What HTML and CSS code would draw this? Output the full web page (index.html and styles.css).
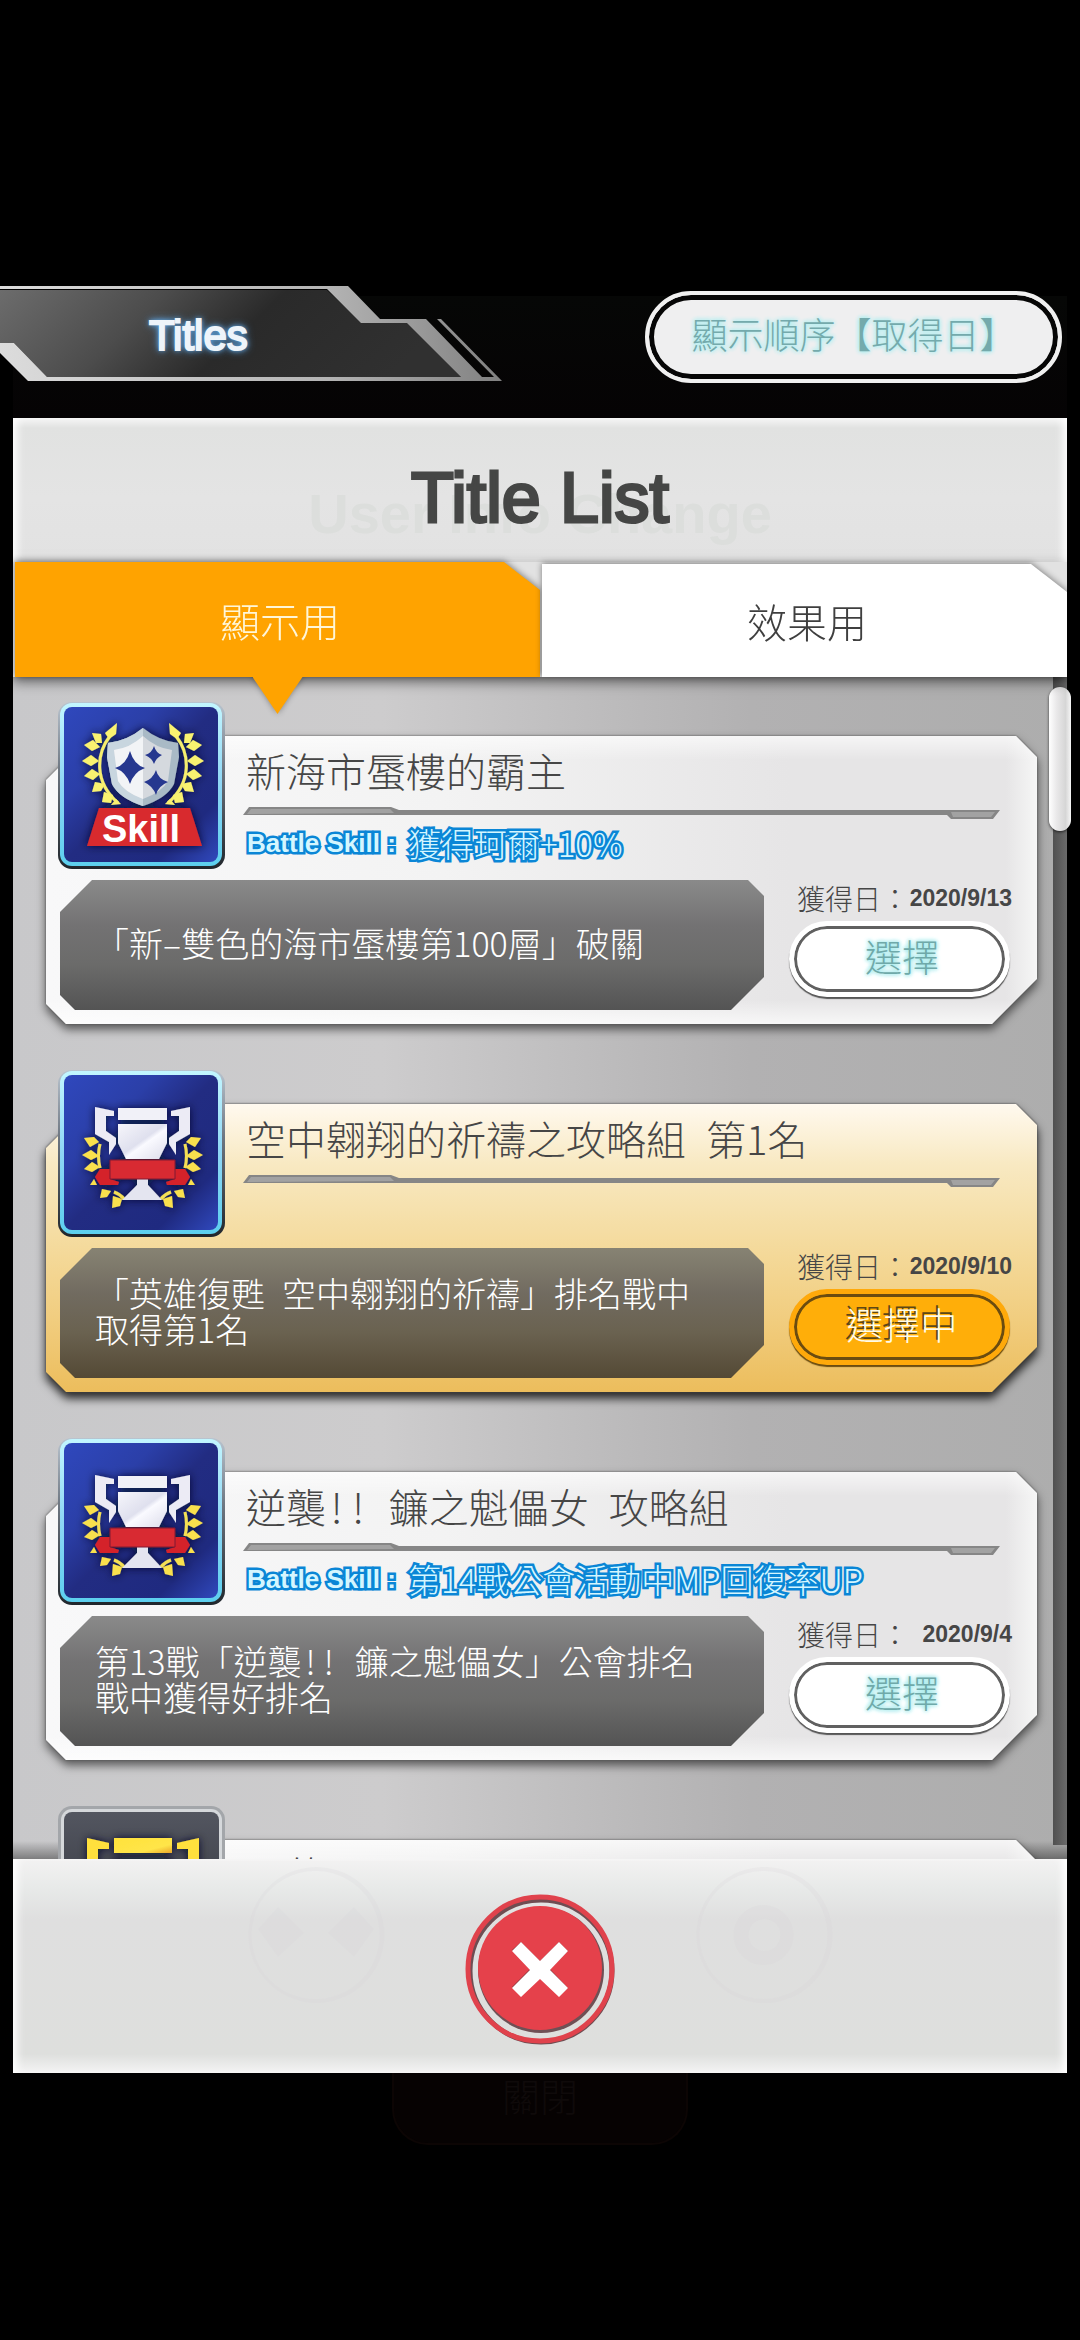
FILE: index.html
```html
<!DOCTYPE html>
<html lang="zh-Hant">
<head>
<meta charset="utf-8">
<meta name="viewport" content="width=device-width, initial-scale=1">
<title>Titles</title>
<link rel="stylesheet" href="styles.css">
</head>
<body>
<svg class="defs" width="0" height="0" aria-hidden="true">
  <defs>
    <linearGradient id="blue" x1="0" y1="0" x2="1" y2="1">
      <stop offset="0" stop-color="#2f48bd"/><stop offset=".3" stop-color="#2b3fa8"/>
      <stop offset=".5" stop-color="#222c82"/><stop offset=".8" stop-color="#1f2a80"/><stop offset="1" stop-color="#3049bd"/>
    </linearGradient>
    <linearGradient id="rim" x1="0" y1="0" x2="0" y2="1">
      <stop offset="0" stop-color="#c2f6ff"/><stop offset=".5" stop-color="#8fd6f5"/><stop offset="1" stop-color="#5ccfee"/>
    </linearGradient>
    <linearGradient id="edge" x1="0" y1="0" x2="0" y2="1">
      <stop offset="0" stop-color="#b9c4cf"/><stop offset=".4" stop-color="#6e7782"/><stop offset="1" stop-color="#20262c"/>
    </linearGradient>
    <linearGradient id="slate" x1="0" y1="0" x2="0" y2="1">
      <stop offset="0" stop-color="#535660"/><stop offset="1" stop-color="#2b2d35"/>
    </linearGradient>
    <linearGradient id="silver" x1="0" y1="0" x2="1" y2="1">
      <stop offset="0" stop-color="#f6f6fb"/><stop offset=".48" stop-color="#dfe0ee"/><stop offset=".56" stop-color="#fafaff"/><stop offset="1" stop-color="#dcdcea"/>
    </linearGradient>
    <linearGradient id="gold" x1="0" y1="0" x2="1" y2="1">
      <stop offset="0" stop-color="#ffe23c"/><stop offset=".7" stop-color="#ffe548"/><stop offset="1" stop-color="#e9a52c"/>
    </linearGradient>
    <filter id="dark" x="-20%" y="-20%" width="140%" height="140%">
      <feDropShadow dx="0" dy="0" stdDeviation="4" flood-color="#060a2c" flood-opacity=".9"/>
    </filter>

    <symbol id="frame" viewBox="0 0 167 167">
      <rect width="167" height="167" rx="14" fill="url(#edge)"/>
      <rect x="2" y="1" width="162" height="163" rx="12" fill="url(#rim)"/>
      <rect x="6" y="5" width="154" height="155" rx="8" fill="url(#blue)"/>
    </symbol>

    <symbol id="skill-laurel" viewBox="0 0 167 167">
      <path d="M52 34C38 52 36 80 60 101" fill="none" stroke="#f6ee6e" stroke-width="3"/>
      <g fill="#f9f26f">
        <path d="M59 21l-1 11-7 5-4-6zM34 31l9 1 1 9-6 0zM26 43l9-5 7 7-8 4zM24 59l9-6 8 6-8 5zM26 74l8-7 8 5-7 6zM34 90l3-10 10 2-4 7zM44 100l2-10 9 3-2 8zM53 103l5-6 5 5z"/>
      </g>
    </symbol>

    <symbol id="skill" viewBox="0 0 167 167">
      <use href="#frame"/>
      <g filter="url(#dark)">
        <use href="#skill-laurel"/>
        <use href="#skill-laurel" transform="translate(170 0) scale(-1 1)"/>
        <path d="M85 26Q101 39 120 41L121 55 116 82Q109 96 85 104 61 96 54 82L49 55 50 41Q69 39 85 26z" fill="#a9bac6"/>
        <path d="M85 26Q69 39 50 41L49 55 54 82Q61 96 85 104z" fill="#c8d6df"/>
        <path d="M85 34Q98 46 114 48L110 79Q104 90 85 97 66 90 60 79L56 48Q72 46 85 34z" fill="#d5d9de"/>
        <path d="M85 34Q72 46 56 48L60 79Q66 90 85 97z" fill="#f2f4f6"/>
        <path d="M72 49Q76 63 87 66 76 70 72 82 68 70 57 66 68 63 72 49zM96 44Q98 51 104 53 98 56 96 62 94 56 87 53 94 51 96 44zM98 68Q100 77 110 80 100 84 98 93 95 84 86 80 95 77 98 68z" fill="#27388f"/>
        <path d="M41 106h91l12 38H29z" fill="#d8292f"/>
      </g>
      <text x="44" y="140" class="badge-text">Skill</text>
    </symbol>

    <symbol id="cup-side" viewBox="0 0 167 167">
      <path d="M37 37l19 4v5h-8v15l10 7v6l-7 11V72L37 64z" fill="#ecebf5"/>
      <path d="M42 74q-3 12 0 24M56 122q6 2 10 7" fill="none" stroke="#f4df55" stroke-width="3"/>
      <path d="M26 68l10-1 5 5-9 5zM24 85l9-5 8 6-8 4zM26 99l8-7 8 5-8 5zM32 115l4-6 3 6zM42 128l2-9 9 2-4 6zM54 138l1-12 9 3-2 7z" fill="#f9e04e"/>
      <path d="M37 107l5-8h10v10l9 3-1 3H42z" fill="#d4222a"/>
    </symbol>

    <symbol id="trophy" viewBox="0 0 167 167">
      <use href="#frame"/>
      <g filter="url(#dark)">
        <use href="#cup-side"/>
        <use href="#cup-side" transform="translate(169 0) scale(-1 1)"/>
        <path d="M60 38h49v12H60z" fill="#f1f1f8"/>
        <path d="M60 54h49v19l-8 16H68L60 73z" fill="url(#silver)"/>
        <path d="M79 109h11v6l14 15H64l15-15z" fill="#e4e5f0"/>
        <path d="M52 90h65v19H52z" fill="#d82a30" stroke="#7e1630" stroke-width="1"/>
      </g>
    </symbol>

    <symbol id="gold-side" viewBox="0 0 167 167">
      <path d="M29 32l22 5v6H40v20l12 9v16l-6-10-17-12z" fill="#ffe03c"/>
    </symbol>

    <symbol id="trophy-gold" viewBox="0 0 167 167">
      <rect width="167" height="167" rx="14" fill="#a3a6aa"/>
      <rect x="3" y="3" width="161" height="161" rx="11" fill="#d5d8db"/>
      <rect x="6" y="6" width="155" height="155" rx="8" fill="url(#slate)"/>
      <g filter="url(#dark)">
        <use href="#gold-side"/>
        <use href="#gold-side" transform="translate(170 0) scale(-1 1)"/>
        <path d="M56 32h58v15H56z" fill="url(#gold)"/>
        <path d="M56 53h58v20l-12 24H68L56 73z" fill="url(#gold)"/>
      </g>
    </symbol>

    <symbol id="divider" viewBox="0 0 757 12" preserveAspectRatio="none">
      <path d="M0 8L6 0H148L156 3H757L750 12H708L704 8z" fill="#868686"/>
      <path d="M4 7L8 2H147L151 6zM708 5H752L748 10H710z" fill="#a2a2a2"/>
    </symbol>
  </defs>
</svg>

<main class="screen">
  <header class="topbar">
    <div class="banner">
      <svg class="banner-art" viewBox="0 0 502 96" aria-hidden="true">
        <defs>
          <linearGradient id="bar-fill" x1="0" y1="0" x2="1" y2=".2">
            <stop offset="0" stop-color="#6c6c6c"/><stop offset=".35" stop-color="#4c4c4c"/><stop offset=".6" stop-color="#2a2a2a"/><stop offset="1" stop-color="#303030"/>
          </linearGradient>
          <linearGradient id="bar-edge" x1="0" y1="0" x2="1" y2="0">
            <stop offset="0" stop-color="#dcdcdc"/><stop offset=".65" stop-color="#b4b4b4"/><stop offset="1" stop-color="#808080"/>
          </linearGradient>
        </defs>
        <path d="M0 4H327L361 36H407L461 91H47L14 57H0z" fill="url(#bar-fill)"/>
        <path d="M0 0H348L380 33H426L482 91H494L437 33H441L502 95H28L0 67V57H14L47 91H461L407 37H361L327 3H0z" fill="url(#bar-edge)"/>
      </svg>
      <h1 class="banner-text">Titles</h1>
    </div>
    <button class="sort" type="button">顯示順序【取得日】</button>
  </header>

  <section class="panel">
    <div class="panel-head">
      <span class="ghost" aria-hidden="true">User Info Change</span>
      <h2 class="panel-title">Title List</h2>
    </div>

    <nav class="tabs">
      <button class="tab tab-active" type="button"><span>顯示用</span></button>
      <button class="tab" type="button"><span>效果用</span></button>
    </nav>

    <div class="list-area">
      <div class="list">
        <article class="card">
          <div class="plate"></div>
          <div class="card-top">
            <svg class="badge" role="img" aria-label="Skill"><use href="#skill"/></svg>
            <div class="info">
              <h3 class="name">新海市蜃樓的霸主</h3>
              <svg class="divider" aria-hidden="true"><use href="#divider"/></svg>
              <p class="skill"><span class="skill-label">Battle Skill :</span><span>獲得珂爾+10%</span></p>
            </div>
          </div>
          <div class="card-bottom">
            <div class="desc"><p>「新<span class="half">–</span>雙色的海市蜃樓第100層」破關</p></div>
            <div class="side">
              <p class="date"><span>獲得日：</span><time>2020/9/13</time></p>
              <button class="pick" type="button">選擇</button>
            </div>
          </div>
        </article>

        <article class="card card-selected">
          <div class="plate"></div>
          <div class="card-top">
            <svg class="badge" role="img" aria-label="Trophy"><use href="#trophy"/></svg>
            <div class="info">
              <h3 class="name">空中翱翔的祈禱之攻略組&ensp;第1名</h3>
              <svg class="divider" aria-hidden="true"><use href="#divider"/></svg>
            </div>
          </div>
          <div class="card-bottom">
            <div class="desc"><p>「英雄復甦&ensp;空中翱翔的祈禱」排名戰中<br>取得第1名</p></div>
            <div class="side">
              <p class="date"><span>獲得日：</span><time>2020/9/10</time></p>
              <button class="pick pick-on" type="button">選擇中</button>
            </div>
          </div>
        </article>

        <article class="card">
          <div class="plate"></div>
          <div class="card-top">
            <svg class="badge" role="img" aria-label="Trophy"><use href="#trophy"/></svg>
            <div class="info">
              <h3 class="name">逆襲<span class="half">!</span><span class="half">!</span>&ensp;鐮之魁儡女&ensp;攻略組</h3>
              <svg class="divider" aria-hidden="true"><use href="#divider"/></svg>
              <p class="skill"><span class="skill-label">Battle Skill :</span><span>第14戰公會活動中MP回復率UP</span></p>
            </div>
          </div>
          <div class="card-bottom">
            <div class="desc"><p>第13戰「逆襲<span class="half">!</span><span class="half">!</span>&ensp;鐮之魁儡女」公會排名<br>戰中獲得好排名</p></div>
            <div class="side">
              <p class="date"><span>獲得日：</span><time>2020/9/4</time></p>
              <button class="pick" type="button">選擇</button>
            </div>
          </div>
        </article>

        <article class="card">
          <div class="plate"></div>
          <div class="card-top">
            <svg class="badge" role="img" aria-label="Gold trophy"><use href="#trophy-gold"/></svg>
            <div class="info">
              <h3 class="name">目的</h3>
            </div>
          </div>
        </article>
      </div>
      <div class="scrollbar" aria-hidden="true"><div class="thumb"></div></div>
    </div>

    <footer class="panel-foot">
      <svg class="ghost-icons" viewBox="0 0 540 150" aria-hidden="true">
        <g fill="#d6d4d9">
          <path fill-rule="evenodd" d="M60 8a68 68 0 1 0 1 0zM60 12a64 64 0 1 1-1 0z"/>
          <path d="M2 70l20-22 26 26-26 24zM118 70L98 48 72 74l26 24z"/>
          <path fill-rule="evenodd" d="M508 8a68 68 0 1 0 1 0zM508 12a64 64 0 1 1-1 0zM508 46a30 30 0 1 1-1 0zM508 60a16 16 0 1 0 1 0z"/>
        </g>
      </svg>
      <button class="close" type="button" aria-label="Close">
        <svg viewBox="0 0 151 153" aria-hidden="true">
          <circle cx="76" cy="78" r="71" fill="none" stroke="#6f4d52" stroke-width="5"/>
          <circle cx="75" cy="76" r="72" fill="none" stroke="#e0424c" stroke-width="5"/>
          <circle cx="76" cy="77" r="63" fill="#6f5055"/>
          <circle cx="75" cy="75" r="62" fill="#e5414b"/>
          <path d="M47 57l9-8 19 19 19-19 9 9-18 18 18 19-9 8-19-18-19 18-9-9 18-18z" fill="#8a3a40"/>
          <path d="M47 58l9-9 19 19 19-19 9 9-18 19 18 18-9 9-19-18-19 18-9-9 18-18z" fill="#fff"/>
        </svg>
      </button>
    </footer>
  </section>
  <div class="behind" aria-hidden="true">關閉</div>
</main>
</body>
</html>
```
FILE: styles.css
```css
* { box-sizing: border-box; }

body {
  margin: 0;
  background: #000;
  color: #464646;
  font-family: "Noto Sans CJK TC", sans-serif;
  font-weight: 300;
  text-spacing-trim: space-all;
}

h1, h2, h3, p { margin: 0; font-weight: inherit; }

button {
  border: 0;
  padding: 0;
  background: none;
  color: inherit;
  font: inherit;
}

.defs { position: absolute; }

.screen {
  display: flex;
  flex-direction: column;
  height: 100vh;
  padding: 286px 13px 267px;
  background: linear-gradient(#000 10px, #060706 10px, #050304 132px, #000 132px) content-box, #000;
}

/* top bar */

.topbar {
  display: flex;
  justify-content: space-between;
  align-items: flex-start;
  margin: 0 5px 35px -13px;
}

.banner { position: relative; width: 502px; }
.banner-art { display: block; width: 100%; }

.banner-text {
  position: absolute;
  inset: 0;
  padding-left: 149px;
  font: 400 42px/100px "Liberation Sans", sans-serif;
  color: #eef4fa;
  -webkit-text-stroke: 2px #eef4fa;
  text-shadow: 0 0 6px #5fa4e0, 0 0 10px #5fa4e0, 0 0 4px #5fa4e0;
}

.sort {
  width: 417px;
  height: 92px;
  margin-top: 5px;
  padding-bottom: 8px;
  border: 4px solid #f0f0f0;
  border-radius: 46px;
  background: #efeff0;
  box-shadow: inset 0 0 0 5px #060606;
  color: #74aaac;
  font-size: 36px;
  text-shadow: 0 0 4px #b4eef0, 0 0 4px #b4eef0, 0 0 5px #b4eef0;
}

/* panel */

.panel {
  display: flex;
  flex-direction: column;
  flex: 1;
  min-height: 0;
  background: #e3e3e3;
}

.panel-head {
  position: relative;
  height: 144px;
  text-align: center;
  background: linear-gradient(#f6f6f6, #e1e2e1 10px, #e4e4e4 80px, #e2e2e2);
  box-shadow: inset 8px 0 8px -4px #fff, inset -8px 0 8px -4px #fff;
}

.panel-title {
  position: relative;
  color: #454645;
  font: 400 70px/160px "Liberation Sans", sans-serif;
  -webkit-text-stroke: 3px #454645;
}

.ghost {
  position: absolute;
  inset: 0;
  color: #dcdedc;
  font: 700 56px/192px "Liberation Sans", sans-serif;
}

/* tabs */

.tabs {
  position: relative;
  z-index: 2;
  display: flex;
  align-items: flex-end;
  gap: 2px;
  height: 115px;
  padding-left: 2px;
  box-shadow: 0 5px 12px #00000080;
  background: #e2e2e2;
}

.tab {
  position: relative;
  flex: 1;
  height: 113px;
  padding-left: 5px;
  font-size: 40px;
  color: #3f3f3f;
  filter: drop-shadow(0 -1px 3px #00000070);
}

.tab::before {
  content: "";
  position: absolute;
  inset: 0;
  background: #fff;
  clip-path: polygon(0 0, calc(100% - 36px) 0, 100% 28px, 100% 100%, 0 100%);
}

.tab span { position: relative; }

.tab-active { height: 115px; color: #fff6d8; }
.tab-active::before { background: #ffa300; }

.tab-active::after {
  content: "";
  position: absolute;
  top: 100%;
  left: 50%;
  width: 50px;
  height: 37px;
  margin-left: -25px;
  background: #ffa300;
  clip-path: polygon(0 0, 100% 0, 50% 100%);
}

/* list */

.list-area {
  position: relative;
  flex: 1;
  min-height: 0;
}

.list {
  display: flex;
  flex-direction: column;
  gap: 80px;
  height: 100%;
  padding: 59px 30px 0 33px;
  overflow: hidden;
  background:
    linear-gradient(to top, #00000060, #0000 18px),
    linear-gradient(90deg, #c8c8ca, #cdcccd 35%, #b2b1b2 70%, #adadad);
}

.card {
  position: relative;
  flex: none;
  height: 288px;
  padding: 0 25px 14px 14px;
}

.plate {
  position: absolute;
  inset: 0;
  filter: drop-shadow(0 0 1px #555) drop-shadow(0 5px 5px #00000090);
}

.plate::before {
  content: "";
  position: absolute;
  inset: 0;
  background:
    linear-gradient(#ffffffa0, #ffffff00 24px, #ffffff00 264px, #ffffffb0),
    linear-gradient(90deg, #f8f8f9, #f3f3f3 40%, #e6e5e6 75%, #e6e5e6 960px, #f6f6f6);
  clip-path: polygon(44px 0, calc(100% - 21px) 0, 100% 21px, 100% calc(100% - 45px), calc(100% - 45px) 100%, 20px 100%, 0 calc(100% - 20px), 0 44px);
}

.card-selected .plate { filter: drop-shadow(0 0 1px #444) drop-shadow(0 6px 5px #000000d0); }

.card-selected .plate::before {
  background: linear-gradient(#fff9ef, #f8e9c2 60px, #f4d999 150px, #f1cd7f 215px, #ecbd5c);
}

.card-top {
  position: relative;
  display: flex;
  gap: 18px;
  height: 144px;
}

.badge {
  flex: none;
  width: 167px;
  height: 167px;
  margin: -34px 0 0 -2px;
}

.badge-text {
  font: 700 38px "Liberation Sans", sans-serif;
  fill: #fff;
}

.info { flex: 1; padding-right: 12px; }

.name {
  height: 71px;
  padding: 5px 0 0 3px;
  font-size: 40px;
  line-height: 58px;
  white-space: nowrap;
}

.divider {
  display: block;
  width: 100%;
  height: 12px;
}

.skill {
  display: flex;
  align-items: center;
  padding: 2px 0 0 4px;
  color: #d4f6ff;
  font-size: 33px;
  line-height: 44px;
  white-space: nowrap;
  -webkit-text-stroke: 5px #0a86d6;
  paint-order: stroke fill;
}

.skill-label {
  width: 161px;
  font-family: "Liberation Sans", sans-serif;
  font-size: 26px;
  font-weight: 700;
}

.half { display: inline-block; width: 1ch; text-align: center; }

.card-bottom {
  position: relative;
  display: flex;
  gap: 23px;
}

.desc {
  display: flex;
  align-items: center;
  flex: 1;
  height: 130px;
  padding: 0 0 5px 35px;
  background: linear-gradient(#8a8a8a, #737273 35%, #6b6b6a 65%, #545454);
  clip-path: polygon(32px 0, calc(100% - 16px) 0, 100% 16px, 100% calc(100% - 33px), calc(100% - 33px) 100%, 15px 100%, 0 calc(100% - 15px), 0 32px);
  color: #fff;
  font-size: 34px;
  line-height: 36px;
  white-space: nowrap;
}

.card-selected .desc { background: linear-gradient(#878373, #716b60 35%, #6a6250 65%, #544935); }

.side { width: 225px; }

.date {
  display: flex;
  justify-content: space-between;
  padding-left: 10px;
  font-size: 28px;
  line-height: 36px;
  white-space: nowrap;
}

.date time { font: 700 23px/36px "Liberation Sans", sans-serif; }

.pick {
  display: block;
  width: 221px;
  height: 76px;
  margin: 5px 0 0 2px;
  padding: 0 0 6px 5px;
  border: 5px solid #fff;
  border-radius: 38px;
  background: #fff;
  box-shadow: inset 0 0 0 3px #606060, 0 2px 1px 0 #555;
  color: #6fa9a9;
  font-size: 37px;
  line-height: 54px;
  text-shadow: 0 0 4px #a5eaec, 0 0 4px #a5eaec, 0 0 5px #a5eaec;
}

.pick-on {
  border-color: #ffa90a;
  background: #ffae09;
  box-shadow: inset 0 0 0 3px #6b4c10, 0 2px 1px 0 #6b4c10;
  color: #fffbe8;
  text-shadow: -2px -3px 0 #5d4716;
}

.scrollbar {
  position: absolute;
  inset: 0 0 14px auto;
  width: 14px;
  background: linear-gradient(90deg, #505050, #6a6a6a);
}

.thumb {
  position: relative;
  width: 22px;
  height: 144px;
  margin: 10px 0 0 -4px;
  border-radius: 11px;
  background: linear-gradient(90deg, #fff, #e9e8e9 35%, #d6d6d6 75%, #f6f6f6);
  box-shadow: 0 1px 3px #000000b0;
}

/* footer */

.panel-foot {
  display: flex;
  justify-content: center;
  position: relative;
  height: 214px;
  padding-top: 34px;
  background: linear-gradient(#f3f2f2, #e8eae9 28px, #dfdfdf 60px, #dedfdd 195px, #f4f4f4);
  box-shadow: inset 8px 0 8px -4px #fff, inset -8px 0 8px -4px #fff;
}

.ghost-icons {
  position: absolute;
  top: 0;
  left: 50%;
  width: 540px;
  height: 150px;
  margin-left: -284px;
  overflow: visible;
  opacity: .2;
}

.close { position: relative; width: 151px; height: 153px; }
.close svg { display: block; overflow: visible; }

.behind {
  align-self: center;
  width: 296px;
  height: 72px;
  margin-bottom: -72px;
  border: 2px solid #0c0504;
  border-top: 0;
  border-radius: 0 0 36px 36px;
  background: #060202;
  color: #0f0a0a;
  font-size: 38px;
  line-height: 44px;
  text-align: center;
}
```
